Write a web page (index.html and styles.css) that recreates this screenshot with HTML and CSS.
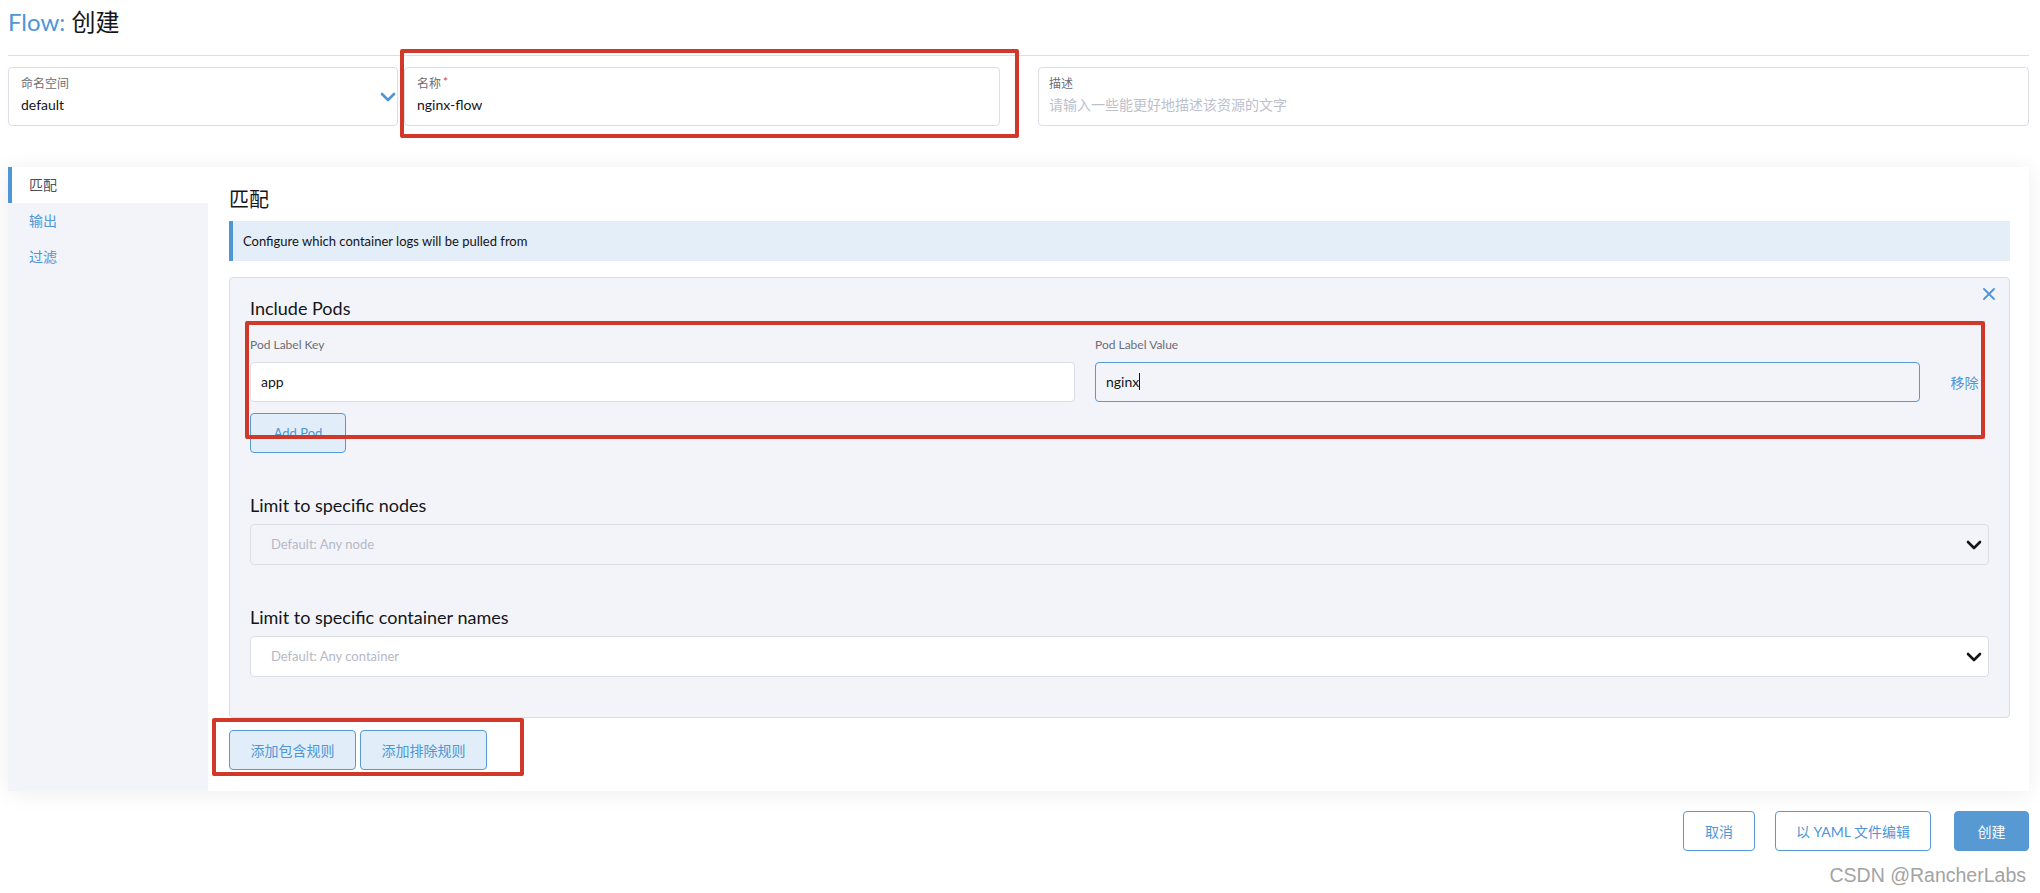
FILE: index.html
```html
<!DOCTYPE html>
<html lang="zh-CN">
<head>
  <meta charset="UTF-8" />
  <meta name="viewport" content="width=device-width, initial-scale=1.0"/>
  <title>Flow: 创建</title>
  <link rel="stylesheet" href="styles.css">
</head>
<body>
<div class="page">

  <!-- Title -->
  <h1 class="title"><span class="title-type">Flow:</span> 创建</h1>

  <!-- Namespace / Name / Description -->
  <div class="top-fields">
    <div class="field field-ns">
      <div class="field-label">命名空间</div>
      <div class="field-value">default</div>
      <svg class="ns-caret" width="16" height="10" viewBox="0 0 16 10">
        <path d="M2 2 L8 8 L14 2" fill="none" stroke="#4e96d6" stroke-width="2.6" stroke-linecap="round" stroke-linejoin="round"/>
      </svg>
    </div>
    <div class="field field-name">
      <div class="field-label">名称<span class="required">*</span></div>
      <div class="field-value">nginx-flow</div>
    </div>
    <div class="field field-desc">
      <div class="field-label">描述</div>
      <div class="field-value placeholder">请输入一些能更好地描述该资源的文字</div>
    </div>
  </div>

  <!-- Tabs + body -->
  <div class="tabbed">
    <ul class="tabs">
      <li class="tab active">匹配</li>
      <li class="tab">输出</li>
      <li class="tab">过滤</li>
    </ul>

    <div class="tab-body">
      <h2>匹配</h2>
      <div class="banner">Configure which container logs will be pulled from</div>

      <div class="rule">
        <span class="rule-close">
          <svg width="12" height="12" viewBox="0 0 12 12">
            <path d="M1 1 L11 11 M11 1 L1 11" stroke="#4e96d6" stroke-width="1.8" stroke-linecap="round"/>
          </svg>
        </span>

        <h3>Include Pods</h3>
        <div class="kv-grid">
          <label>Pod Label Key</label>
          <label>Pod Label Value</label>
          <span></span>
          <div class="input">app</div>
          <div class="input focused">nginx<span class="cursor"></span></div>
          <a class="remove">移除</a>
        </div>
        <button class="btn-light add-pod">Add Pod</button>

        <h3 class="section">Limit to specific nodes</h3>
        <div class="select disabled">
          <span class="placeholder">Default: Any node</span>
          <svg class="select-caret" width="16" height="10" viewBox="0 0 16 10">
            <path d="M2 2 L8 8 L14 2" fill="none" stroke="#141419" stroke-width="2.6" stroke-linecap="round" stroke-linejoin="round"/>
          </svg>
        </div>

        <h3 class="section">Limit to specific container names</h3>
        <div class="select">
          <span class="placeholder">Default: Any container</span>
          <svg class="select-caret" width="16" height="10" viewBox="0 0 16 10">
            <path d="M2 2 L8 8 L14 2" fill="none" stroke="#141419" stroke-width="2.6" stroke-linecap="round" stroke-linejoin="round"/>
          </svg>
        </div>
      </div>

      <div class="rule-actions">
        <button class="btn-light">添加包含规则</button>
        <button class="btn-light">添加排除规则</button>
      </div>
    </div>
  </div>

  <!-- Footer -->
  <div class="footer">
    <button class="btn-outline">取消</button>
    <button class="btn-outline yaml">以 YAML 文件编辑</button>
    <button class="btn-primary">创建</button>
  </div>
  <div class="watermark">CSDN @RancherLabs</div>

  <!-- annotation boxes -->
  <div class="mark mark-name"></div>
  <div class="mark mark-pods"></div>
  <div class="mark mark-rules"></div>
</div>
</body>
</html>
```

FILE: styles.css
```css
* {
  box-sizing: border-box;
}

body {
  margin: 0;
  background: #fff;
  font-family: Lato, "Noto Sans CJK SC", sans-serif;
  color: #141419;
}

.page {
  position: relative;
  padding: 0 11px 0 8px;
}

/* Title */
.title {
  margin: 0;
  padding: 7px 0 19px;
  font-size: 24px;
  line-height: 29px;
  font-weight: normal;
  border-bottom: 1px solid #dcdee7;
}

.title-type {
  color: #4e96d6;
}

/* Top fields */
.top-fields {
  display: flex;
  margin-top: 11px;
}

.field {
  position: relative;
  height: 59px;
  padding: 8px 12px 0;
  border: 1px solid #dcdee7;
  border-radius: 4px;
  background: #fff;
}

.field-ns { width: 390px; }
.field-name { width: 596px; margin-left: 6px; }
.field-desc { flex: 1; margin-left: 38px; padding-left: 10px; }

.field-label {
  font-size: 12px;
  line-height: 16px;
  color: #6c6c76;
}

.field-value {
  margin-top: 4px;
  font-size: 14px;
  line-height: 18px;
}

.field-value.placeholder {
  color: #bdbfcc;
}

.required {
  color: #e04646;
  font-size: 12px;
  line-height: 12px;
  vertical-align: top;
  margin-left: 2px;
}

.ns-caret {
  position: absolute;
  right: 1px;
  top: 24px;
}

/* Tabbed panel */
.tabbed {
  display: flex;
  margin-top: 41px;
  box-shadow: 0 2px 22px rgba(0, 0, 0, 0.07);
}

.tabs {
  width: 200px;
  margin: 0;
  padding: 0;
  list-style: none;
  background: #f3f4f9;
}

.tab {
  height: 36px;
  line-height: 36px;
  padding-left: 21px;
  font-size: 14px;
  color: #4e96d6;
}

.tab.active {
  background: #fff;
  color: #4f4f58;
  border-left: 4px solid #4e96d6;
  padding-left: 17px;
}

.tab-body {
  flex: 1;
  background: #fff;
  padding: 20px 19px 21px 21px;
}

h2 {
  margin: 0;
  font-size: 20px;
  line-height: 24px;
  font-weight: normal;
}

.banner {
  margin-top: 10px;
  height: 40px;
  line-height: 40px;
  padding-left: 10px;
  background: #e3eef8;
  border-left: 4px solid #4e96d6;
  font-size: 13px;
}

/* Rule box */
.rule {
  position: relative;
  margin-top: 16px;
  padding: 18px 20px 40px;
  background: #f3f4f9;
  border: 1px solid #dcdee7;
  border-radius: 4px;
}

.rule-close {
  position: absolute;
  top: 6px;
  right: 14px;
}

h3 {
  margin: 0;
  font-size: 18px;
  line-height: 24px;
  font-weight: normal;
}

h3.section {
  margin-top: 40px;
}

.kv-grid {
  display: grid;
  grid-template-columns: 1fr 1fr 49px;
  column-gap: 20px;
  row-gap: 9px;
  align-items: center;
  margin-top: 17px;
}

.kv-grid label {
  font-size: 12px;
  line-height: 16px;
  color: #6c6c76;
}

.input {
  height: 40px;
  line-height: 38px;
  padding: 0 10px;
  border: 1px solid #dcdee7;
  border-radius: 4px;
  background: #fff;
  font-size: 14px;
}

.input.focused {
  background: #f3f4f9;
  border-color: #5699d3;
}

.cursor {
  display: inline-block;
  width: 1px;
  height: 17px;
  background: #141419;
  vertical-align: middle;
  margin-top: -3px;
}

.remove {
  text-align: center;
  font-size: 14px;
  color: #4e96d6;
}

.select {
  position: relative;
  height: 41px;
  line-height: 39px;
  margin-top: 7px;
  padding-left: 20px;
  border: 1px solid #dcdee7;
  border-radius: 4px;
  background: #fff;
  font-size: 13px;
}

.select.disabled {
  background: #f3f4f9;
}

.select .placeholder {
  color: #b6b8c6;
}

.select-caret {
  position: absolute;
  right: 6px;
  top: 15px;
}

/* Buttons */
button {
  font-family: inherit;
  cursor: pointer;
}

.btn-light {
  height: 40px;
  padding: 0 20px;
  font-size: 14px;
  color: #4e96d6;
  background: #e1edf8;
  border: 1px solid #5699d3;
  border-radius: 4px;
}

.add-pod {
  margin-top: 11px;
  width: 96px;
  padding: 0;
  font-size: 13px;
}

.rule-actions {
  display: flex;
  gap: 4px;
  margin-top: 12px;
}

.rule-actions .btn-light {
  width: 127px;
  padding: 0;
}

.footer {
  display: flex;
  justify-content: flex-end;
  margin-top: 20px;
}

.btn-outline,
.btn-primary {
  height: 40px;
  font-size: 14px;
  border-radius: 4px;
  border: 1px solid #5699d3;
}

.btn-outline {
  width: 72px;
  margin-right: 20px;
  background: #fff;
  color: #4e96d6;
}

.btn-outline.yaml {
  width: 156px;
  margin-right: 23px;
}

.btn-primary {
  width: 75px;
  background: #5699d3;
  color: #fff;
}

.watermark {
  margin-top: 12px;
  padding-right: 3px;
  text-align: right;
  font-family: "Liberation Sans", "Noto Sans", sans-serif;
  font-size: 19.5px;
  line-height: 24px;
  color: #a3a3a3;
}

/* red annotation boxes */
.mark {
  position: absolute;
  border: 4px solid #d0392a;
  border-radius: 2px;
}

.mark-name { left: 400px; top: 49px; width: 619px; height: 89px; }
.mark-pods { left: 245px; top: 321px; width: 1740px; height: 118px; }
.mark-rules { left: 212px; top: 718px; width: 312px; height: 58px; }
```
